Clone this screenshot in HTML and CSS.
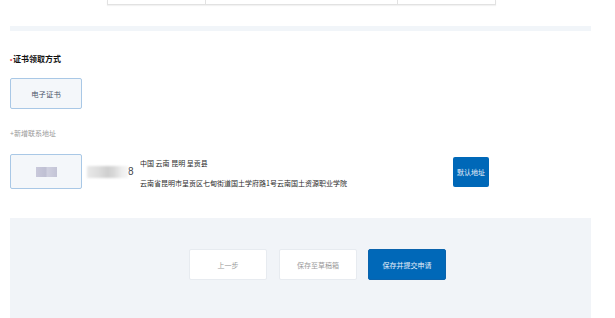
FILE: index.html
```html
<!DOCTYPE html>
<html lang="zh-CN">
<head>
<meta charset="utf-8">
<title>证书领取方式</title>
<link rel="stylesheet" href="styles.css">
</head>
<body>
<div class="page">
  <div class="table-strip">
    <div class="cell"></div>
    <div class="cell"></div>
    <div class="cell"></div>
  </div>
  <div class="band"></div>

  <div class="section">
    <div class="title"><span class="req">*</span>证书领取方式</div>
    <div class="opt-btn">电子证书</div>
    <div class="add-link">+新增联系地址</div>

    <div class="addr-row">
      <div class="addr-box"><span class="blur-name"></span></div>
      <div class="phone"><span class="blur-phone"></span><span class="tail">8</span></div>
      <div class="addr-text">
        <div class="line">中国 云南 昆明 呈贡县</div>
        <div class="line">云南省昆明市呈贡区七甸街道国土学府路1号云南国土资源职业学院</div>
      </div>
      <div class="default-btn">默认地址</div>
    </div>
  </div>

  <div class="footer">
    <div class="btn btn-plain">上一步</div>
    <div class="btn btn-plain">保存至草稿箱</div>
    <div class="btn btn-primary">保存并提交申请</div>
  </div>
</div>
</body>
</html>
```

FILE: styles.css
```css
* { box-sizing: border-box; }
html, body {
  margin: 0;
  padding: 0;
  background: #ffffff;
  font-family: "Noto Sans CJK SC", "Noto Sans", sans-serif;
  color: #333;
}
.page {
  width: 581px;
  margin-left: 10px;
}
.table-strip {
  display: grid;
  grid-template-columns: 98px 192px 98px;
  width: 389px;
  height: 5px;
  margin-left: 97px;
  border: 1px solid #e2e2e2;
  border-top: none;
  box-shadow: 0 1px 1px rgba(0,0,0,0.05);
}
.cell { border-right: 1px solid #e2e2e2; }
.cell:last-child { border-right: none; }
.band {
  margin-top: 21px;
  height: 5px;
  background: #f1f5f9;
}
.section {
  padding-top: 23px;
}
.title {
  font-size: 8px;
  line-height: 10px;
  font-weight: 700;
  color: #111;
  display: flex;
  align-items: center;
}
.req {
  display: block;
  width: 3px;
  font-family: "Liberation Sans", sans-serif;
  font-size: 6px;
  line-height: 6px;
  font-weight: 700;
  color: #e02020;
  padding-top: 3px;
}
.opt-btn {
  margin-top: 14px;
  width: 72px;
  height: 31px;
  border: 1px solid #a9c8e6;
  border-radius: 2px;
  background: #f4f7fa;
  color: #4b5468;
  font-size: 7.4px;
  display: flex;
  align-items: center;
  justify-content: center;
}
.add-link {
  margin-top: 19px;
  font-size: 7px;
  line-height: 10px;
  color: #9a9a9a;
}
.addr-row {
  margin-top: 16px;
  display: flex;
  align-items: center;
  height: 35px;
}
.addr-box {
  width: 72px;
  height: 35px;
  border: 1px solid #a9c8e6;
  border-radius: 2px;
  background: #f4f7fa;
  display: flex;
  align-items: center;
  justify-content: center;
}
.blur-name {
  width: 21px;
  height: 10px;
  background: linear-gradient(90deg, #c9c9db 0%, #bfc0d3 45%, #cfd0df 55%, #c3c4d6 100%);
  filter: blur(0.7px);
}
.phone {
  width: 58px;
  padding-left: 5px;
  display: flex;
  align-items: center;
}
.blur-phone {
  width: 41px;
  height: 12px;
  background: linear-gradient(90deg, #e9e9e9 0%, #dcdcdc 30%, #cfcfcf 50%, #d8d8d8 65%, #eeeeee 85%, #f6f6f6 100%);
  filter: blur(1px);
}
.tail {
  font-size: 10px;
  line-height: 10px;
  color: #444;
  font-family: "Liberation Sans", sans-serif;
}
.addr-text {
  width: 313px;
  font-size: 7px;
  color: #2a2a2a;
  padding-top: 2px;
}
.line { line-height: 10px; }
.line + .line { margin-top: 10px; }
.default-btn {
  width: 36px;
  height: 30px;
  background: #0068b8;
  border-radius: 2px;
  color: #e8f0fa;
  font-size: 7px;
  display: flex;
  align-items: center;
  justify-content: center;
}
.footer {
  margin-top: 29px;
  height: 100px;
  background: #f1f4f8;
  padding-top: 31px;
  padding-left: 179px;
  display: flex;
  align-items: flex-start;
  gap: 12px;
}
.btn {
  width: 78px;
  height: 31px;
  border-radius: 2px;
  font-size: 7px;
  display: flex;
  align-items: center;
  justify-content: center;
}
.btn-plain {
  background: #ffffff;
  border: 1px solid #e7ebf0;
  color: #9b9b9b;
}
.btn-primary {
  background: #0068b8;
  border: 1px solid #0a63ad;
  color: #e8f0fa;
  margin-left: -1px;
}
```
